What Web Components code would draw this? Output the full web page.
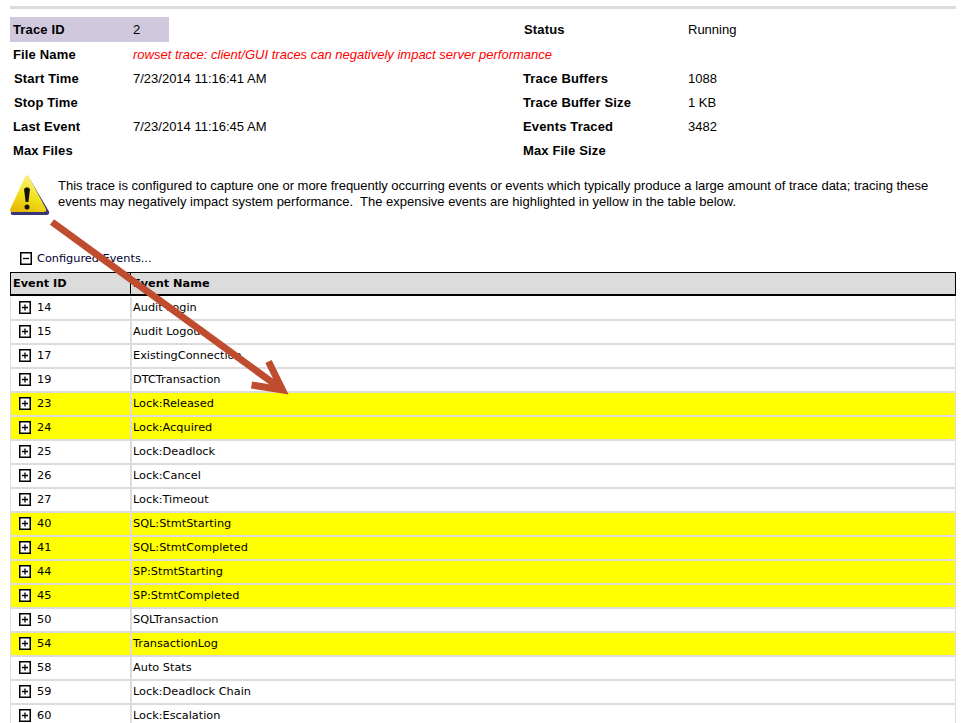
<!DOCTYPE html>
<html><head><meta charset="utf-8"><title>Trace</title>
<style>
html,body{margin:0;height:723px;overflow:hidden;background:#fff}
body{font:13px "Liberation Sans",Arial,sans-serif;color:#000;position:relative}
</style></head>
<body>
<trace-report>
  <info-grid>
    <info-row label="Trace ID" value="2" label2="Status" value2="Running" highlight nudge2></info-row>
    <info-row label="File Name" value="rowset trace: client/GUI traces can negatively impact server performance" alert></info-row>
    <info-row label="Start Time" nudge value="7/23/2014 11:16:41 AM" label2="Trace Buffers" value2="1088"></info-row>
    <info-row label="Stop Time" nudge label2="Trace Buffer Size" value2="1 KB"></info-row>
    <info-row label="Last Event" value="7/23/2014 11:16:45 AM" label2="Events Traced" value2="3482"></info-row>
    <info-row label="Max Files" label2="Max File Size"></info-row>
  </info-grid>
  <warning-note>This trace is configured to capture one or more frequently occurring events or events which typically produce a large amount of trace data; tracing these events may negatively impact system performance.&nbsp; The expensive events are highlighted in yellow in the table below.</warning-note>
  <section-title>Configured Events...</section-title>
  <events-table>
    <event-row id-text="14" name="Audit Login"></event-row>
    <event-row id-text="15" name="Audit Logout"></event-row>
    <event-row id-text="17" name="ExistingConnection"></event-row>
    <event-row id-text="19" name="DTCTransaction"></event-row>
    <event-row id-text="23" name="Lock:Released" hot></event-row>
    <event-row id-text="24" name="Lock:Acquired" hot></event-row>
    <event-row id-text="25" name="Lock:Deadlock"></event-row>
    <event-row id-text="26" name="Lock:Cancel"></event-row>
    <event-row id-text="27" name="Lock:Timeout"></event-row>
    <event-row id-text="40" name="SQL:StmtStarting" hot></event-row>
    <event-row id-text="41" name="SQL:StmtCompleted" hot></event-row>
    <event-row id-text="44" name="SP:StmtStarting" hot></event-row>
    <event-row id-text="45" name="SP:StmtCompleted" hot></event-row>
    <event-row id-text="50" name="SQLTransaction"></event-row>
    <event-row id-text="54" name="TransactionLog" hot></event-row>
    <event-row id-text="58" name="Auto Stats"></event-row>
    <event-row id-text="59" name="Lock:Deadlock Chain"></event-row>
    <event-row id-text="60" name="Lock:Escalation"></event-row>
  </events-table>
</trace-report>
<callout-arrow></callout-arrow>
<script>
const TABLE_FONT='"DejaVu Sans",Verdana,sans-serif';
function esc(s){return (s||'').replace(/&/g,'&amp;').replace(/</g,'&lt;')}
class Base extends HTMLElement{
  render(html){ if(!this.shadowRoot) this.attachShadow({mode:'open'}); this.shadowRoot.innerHTML=html; }
}
customElements.define('trace-report',class extends Base{connectedCallback(){this.render(`<style>
:host{display:block;width:946px;padding:6px 0 0 10px}
.rule{height:3px;background:#dcdcdc;margin-bottom:8px}
</style><div class="rule"></div><slot></slot>`)}});
customElements.define('info-grid',class extends Base{connectedCallback(){this.render(`<style>:host{display:block}</style><slot></slot>`)}});
customElements.define('info-row',class extends Base{connectedCallback(){
  const g=n=>esc(this.getAttribute(n));
  const hl=this.hasAttribute('highlight'),al=this.hasAttribute('alert'),nu=this.hasAttribute('nudge'),nu2=this.hasAttribute('nudge2');
  this.render(`<style>
:host{display:grid;grid-template-columns:123px 36px 354px 165px 1fr;height:24px;align-items:center}
:host([highlight]){height:25px}
div{height:100%;display:flex;align-items:center;white-space:nowrap}
.k{font-weight:bold;padding-left:3px;box-sizing:border-box;letter-spacing:.15px}
.nudge{padding-left:4px}
.v{grid-column:span 2}
.hl{background:#d0c8dc}
.v.hl{grid-column:span 1}
.alert{color:#f00;font-style:italic}
.k2{font-weight:bold;letter-spacing:.15px}
.n2{padding-left:1px}
</style>
<div class="k ${hl?'hl':''} ${nu?'nudge':''}">${g('label')}</div>
<div class="v ${hl?'hl':''} ${al?'alert':''}">${g('value')}</div>
${hl?'<div></div>':''}
<div class="k2 ${nu2?'n2':''}">${g('label2')}</div><div>${g('value2')}</div>`)}});
customElements.define('warn-icon',class extends Base{connectedCallback(){this.render(`<style>:host{display:block;width:40px;height:41px;flex:none}svg{display:block}</style>
<svg width="40" height="41" viewBox="0 0 40 41"><defs><linearGradient id="y" x1=".65" y1="0" x2=".25" y2="1"><stop offset="0" stop-color="#fbf490"/><stop offset=".5" stop-color="#f4e420"/><stop offset="1" stop-color="#e6b800"/></linearGradient></defs>
<path d="M18 1 L39 36.5 Q40 40 36 40 L3 40 Q0 40 1 37 Z" fill="#38367a"/>
<path d="M17 0 Q18 0 19 2 L36 34 Q37 37 34 37 L3 37 Q-1 37 .5 33.5 L15 2 Q16 0 17 0Z" fill="url(#y)"/>
<path d="M14 14 Q17 10.5 20 14 L18.4 27 L15.6 27Z" fill="#14140c"/><circle cx="17" cy="32" r="2.5" fill="#14140c"/></svg>`)}});
customElements.define('warning-note',class extends Base{connectedCallback(){this.render(`<style>
:host{display:flex;gap:8px;margin-top:13px;height:71px}
p{margin:3px 0 0;line-height:16px;width:885px;letter-spacing:-.008px}
</style><warn-icon></warn-icon><p><slot></slot></p>`)}});
customElements.define('tree-toggle',class extends Base{connectedCallback(){
  const minus=this.hasAttribute('minus');
  this.render(`<style>:host{display:block;width:12px;height:13px;flex:none}svg{display:block}</style>
<svg width="12" height="13" viewBox="0 0 12 13"><rect x=".75" y=".75" width="10.5" height="11.5" fill="#fff" stroke="#000" stroke-width="1.5"/><path d="M3 6.5H9${minus?'':'M6 3.5V9.5'}" stroke="#000" stroke-width="1.3" fill="none"/></svg>`)}});
customElements.define('section-title',class extends Base{connectedCallback(){this.render(`<style>
:host{display:flex;align-items:center;gap:5px;height:24px;padding-left:10px;margin-bottom:2px;font-family:${TABLE_FONT};font-size:11.3px;color:#000033}
</style><tree-toggle minus></tree-toggle><slot></slot>`)}});
customElements.define('events-table',class extends Base{connectedCallback(){this.render(`<style>
:host{display:block;font-family:${TABLE_FONT};font-size:11.3px}
.h{display:grid;grid-template-columns:119px 1fr;height:21px;border:1px solid #000;border-bottom-width:2px;background:#dcdcdc;font-weight:bold;align-items:center;box-sizing:content-box;width:944px}
.h div{height:100%;display:flex;align-items:center;padding-left:2px}
.h div+div{border-left:1px solid #000}
.gap{height:1px}
</style><div class="h"><div>Event ID</div><div>Event Name</div></div><div class="gap"></div><slot></slot>`)}});
customElements.define('event-row',class extends Base{connectedCallback(){
  this.render(`<style>
:host{display:grid;grid-template-columns:119px 1fr;height:24px;box-sizing:border-box;border-left:1px solid #dcdcdc;border-right:1px solid #dcdcdc;border-bottom:2px solid #dcdcdc;width:946px}
div{display:flex;align-items:center;height:22px;white-space:nowrap;box-sizing:border-box;padding-bottom:2px}
.id{padding-left:8px;gap:6px}
.nm{border-left:2px solid #dcdcdc;padding-left:1px}
:host([hot]) div{background:#ff0}
</style><div class="id"><tree-toggle></tree-toggle>${esc(this.getAttribute('id-text'))}</div><div class="nm">${esc(this.getAttribute('name'))}</div>`)}});
customElements.define('callout-arrow',class extends Base{connectedCallback(){this.render(`<style>
:host{position:absolute;left:0;top:0;width:966px;height:723px;pointer-events:none}svg{display:block}
</style><svg width="966" height="723"><g fill="none" stroke="#c04c30" stroke-width="7"><path d="M52 222L280 388"/><path d="M268.5 361.5L282.5 390L251.5 385"/></g></svg>`)}});
</script>
</body></html>
